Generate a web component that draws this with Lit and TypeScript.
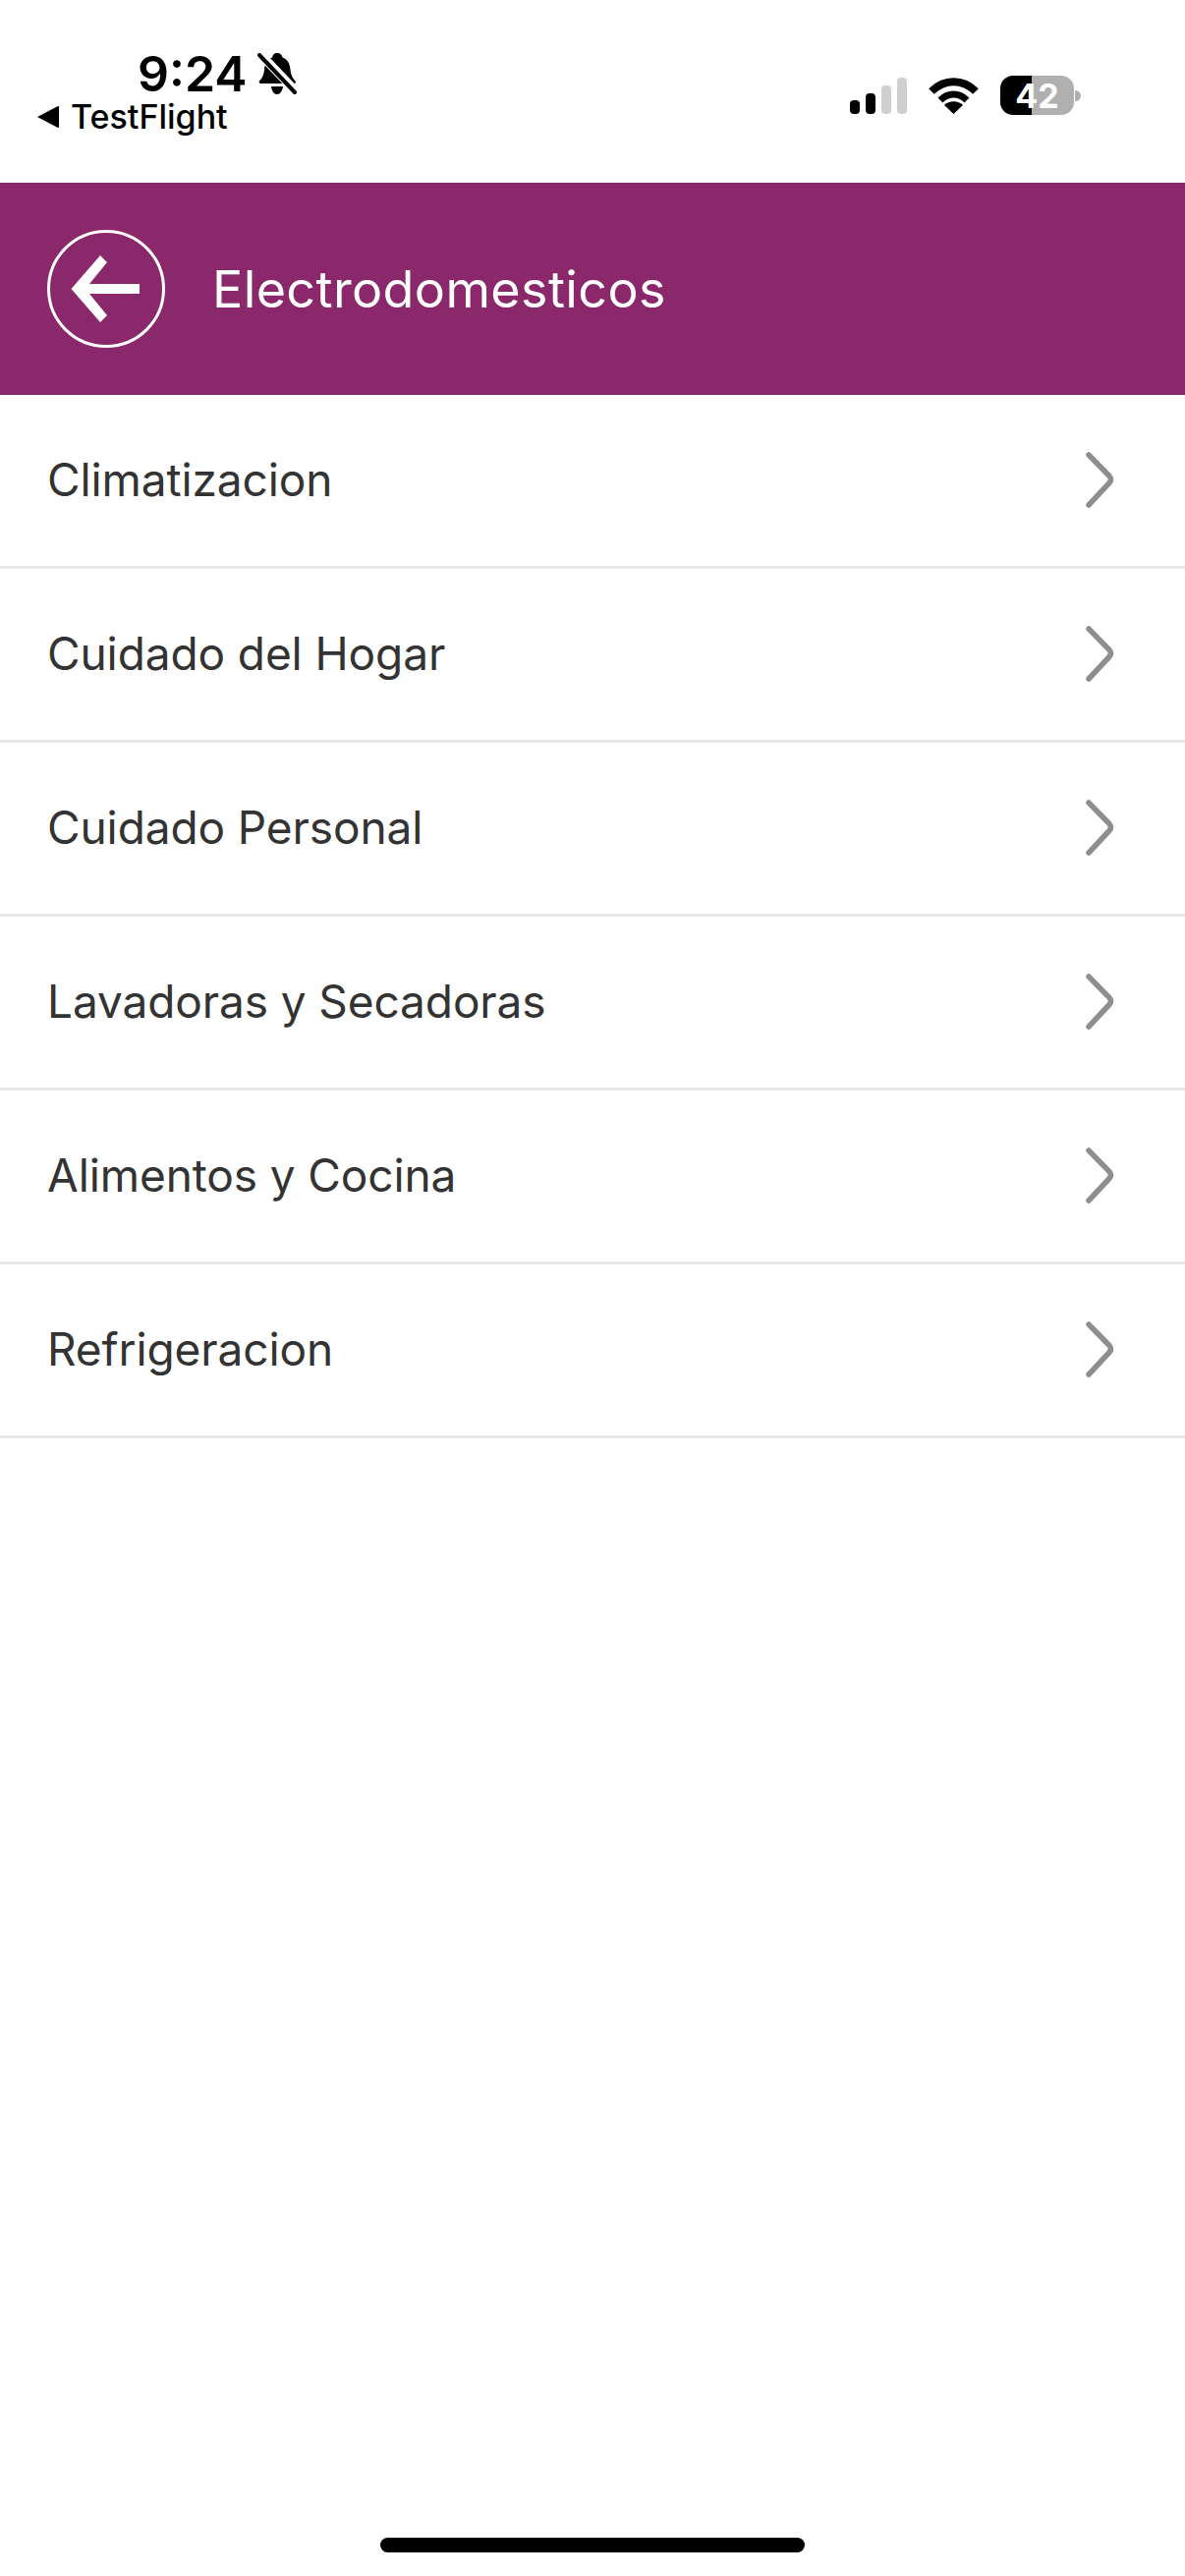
import { LitElement, html, css } from 'lit';
import { customElement } from 'lit/decorators.js';

const ITEMS = [
  'Climatizacion',
  'Cuidado del Hogar',
  'Cuidado Personal',
  'Lavadoras y Secadoras',
  'Alimentos y Cocina',
  'Refrigeracion',
];

@customElement('app-root')
export class AppRoot extends LitElement {
  static styles = css`
    :host {
      display: flex;
      flex-direction: column;
      width: 1206px;
      height: 2622px;
      background: #fff;
      font-family: Inter, 'Liberation Sans', sans-serif;
      overflow: hidden;
    }

    /* status bar */
    .status {
      height: 186px;
      box-sizing: border-box;
      display: flex;
      justify-content: space-between;
      padding: 48px 106px 0 38px;
      color: #000;
    }
    .left {
      display: flex;
      flex-direction: column;
    }
    .clock {
      display: flex;
      align-items: center;
      gap: 10px;
      padding-left: 102px;
      height: 54px;
      font-size: 50px;
      font-weight: 600;
    }
    .back-app {
      display: flex;
      align-items: center;
      gap: 12px;
      height: 33px;
      font-size: 34px;
      font-weight: 500;
    }
    .right {
      display: flex;
      align-items: center;
      height: 40px;
      margin-top: 29px;
    }
    .signal {
      display: flex;
      align-items: flex-end;
      gap: 6px;
      height: 37px;
      margin-right: 22px;
    }
    .signal span {
      width: 10px;
      border-radius: 4px;
      background: #000;
    }
    .signal span.off {
      background: #cfcfcf;
    }
    .wifi {
      margin-right: 22px;
    }
    .battery {
      width: 75px;
      height: 40px;
      border-radius: 13px;
      background: linear-gradient(to right, #000 32px, #b0b0b0 32px);
      color: #fff;
      font-size: 34px;
      font-weight: 700;
      display: flex;
      align-items: center;
      justify-content: center;
    }
    .nub {
      width: 6px;
      height: 11px;
      margin-left: 1px;
      border-radius: 0 6px 6px 0;
      background: #b0b0b0;
    }

    /* purple header */
    .header {
      height: 216px;
      flex: none;
      display: flex;
      align-items: center;
      gap: 48px;
      padding-left: 48px;
      background: #8b286b;
      color: #fff;
      font-size: 52px;
      font-weight: 400;
      letter-spacing: 0.4px;
    }
    .back {
      width: 120px;
      height: 120px;
      display: block;
    }

    /* list */
    .row {
      height: 177px;
      box-sizing: border-box;
      display: flex;
      align-items: center;
      justify-content: space-between;
      padding: 0 72px 0 48px;
      border-bottom: 3px solid #e8e8e8;
      color: #333;
      font-size: 46px;
      letter-spacing: -0.1px;
    }
    .row span {
      margin-top: -2px;
    }

    .spacer {
      flex: 1;
    }
    .home {
      width: 432px;
      height: 15px;
      margin: 0 auto 24px;
      border-radius: 8px;
      background: #000;
    }
  `;

  render() {
    return html`
      <div class="status">
        <div class="left">
          <div class="clock">
            <span>9:24</span>
            <svg width="40" height="42" viewBox="0 0 40 42">
              <path fill="#000" d="M20 0c3 0 5 2 5.500 4.500C31 6.500 33 11 33.500 17c.4 5 2 8 5 11.500.8 1 .3 2.500-1 2.500H4c-2 0-3-1.600-1.700-3C5 25.500 6.500 22 7 17c.5-6 2.500-10.500 8-12.500C15.500 2 17 0 20 0zM14 34h12c-.5 4.500-3 8-6 8s-5.500-3.500-6-8z"/>
              <path stroke="#fff" stroke-width="9" d="M1 -1 41 41"/>
              <path stroke="#000" stroke-width="4" stroke-linecap="round" d="M2 2 38 40"/>
            </svg>
          </div>
          <div class="back-app">
            <svg width="22" height="22" viewBox="0 0 22 22">
              <path fill="#000" d="M0 11 21 0q1 0 1 1v20q0 1-1 1z"/>
            </svg>
            <span>TestFlight</span>
          </div>
        </div>
        <div class="right">
          <div class="signal">
            <span style="height: 14px"></span>
            <span style="height: 21px"></span>
            <span class="off" style="height: 29px"></span>
            <span class="off" style="height: 37px"></span>
          </div>
          <svg class="wifi" width="51" height="37" viewBox="0 0 51 37">
            <path fill="none" stroke="#000" stroke-width="8" d="M3 14C16 1 35 1 48 14"/>
            <path fill="none" stroke="#000" stroke-width="7" d="M12 23C20 15 31 15 39 23"/>
            <path fill="#000" d="M25.500 37 16 28c5-5 14-5 19 0z"/>
          </svg>
          <div class="battery">42</div>
          <div class="nub"></div>
        </div>
      </div>

      <div class="header">
        <svg class="back" viewBox="0 0 120 120">
          <circle cx="60" cy="60" r="58.500" fill="none" stroke="#fff" stroke-width="3"/>
          <path fill="#fff" d="M24.500 60 54 26l7 7-18 22h51v10H43l18 22-7 7z"/>
        </svg>
        <span>Electrodomesticos</span>
      </div>

      ${ITEMS.map(
        (item) => html`
          <div class="row">
            <span>${item}</span>
            <svg width="30" height="60" viewBox="0 0 30 60">
              <path fill="none" stroke="#8e8e8e" stroke-width="5.500" stroke-linecap="round" stroke-linejoin="round" d="M4 4 25 25.500Q28 29 25 32.500L4 55"/>
            </svg>
          </div>
        `
      )}

      <div class="spacer"></div>
      <div class="home"></div>
    `;
  }
}
